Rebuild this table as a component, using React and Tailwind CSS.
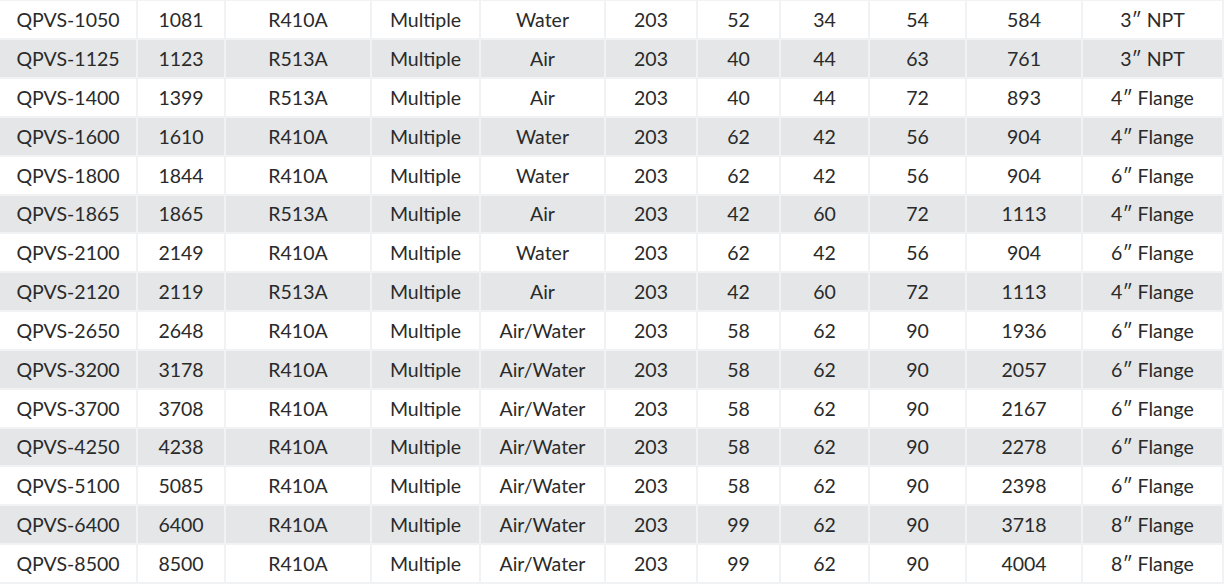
import React from 'react';

const rows = [
  ['QPVS-1050', '1081', 'R410A', 'Multiple', 'Water', '203', '52', '34', '54', '584', '3″ NPT'],
  ['QPVS-1125', '1123', 'R513A', 'Multiple', 'Air', '203', '40', '44', '63', '761', '3″ NPT'],
  ['QPVS-1400', '1399', 'R513A', 'Multiple', 'Air', '203', '40', '44', '72', '893', '4″ Flange'],
  ['QPVS-1600', '1610', 'R410A', 'Multiple', 'Water', '203', '62', '42', '56', '904', '4″ Flange'],
  ['QPVS-1800', '1844', 'R410A', 'Multiple', 'Water', '203', '62', '42', '56', '904', '6″ Flange'],
  ['QPVS-1865', '1865', 'R513A', 'Multiple', 'Air', '203', '42', '60', '72', '1113', '4″ Flange'],
  ['QPVS-2100', '2149', 'R410A', 'Multiple', 'Water', '203', '62', '42', '56', '904', '6″ Flange'],
  ['QPVS-2120', '2119', 'R513A', 'Multiple', 'Air', '203', '42', '60', '72', '1113', '4″ Flange'],
  ['QPVS-2650', '2648', 'R410A', 'Multiple', 'Air/Water', '203', '58', '62', '90', '1936', '6″ Flange'],
  ['QPVS-3200', '3178', 'R410A', 'Multiple', 'Air/Water', '203', '58', '62', '90', '2057', '6″ Flange'],
  ['QPVS-3700', '3708', 'R410A', 'Multiple', 'Air/Water', '203', '58', '62', '90', '2167', '6″ Flange'],
  ['QPVS-4250', '4238', 'R410A', 'Multiple', 'Air/Water', '203', '58', '62', '90', '2278', '6″ Flange'],
  ['QPVS-5100', '5085', 'R410A', 'Multiple', 'Air/Water', '203', '58', '62', '90', '2398', '6″ Flange'],
  ['QPVS-6400', '6400', 'R410A', 'Multiple', 'Air/Water', '203', '99', '62', '90', '3718', '8″ Flange'],
  ['QPVS-8500', '8500', 'R410A', 'Multiple', 'Air/Water', '203', '99', '62', '90', '4004', '8″ Flange'],
];

export default function App() {
  return (
    <div className="w-[1224px] h-[588px] bg-white" style={{ fontFamily: 'Lato, "Noto Sans", sans-serif' }}>
      <div className="flex flex-col gap-[2px] pt-px pr-[2px] pb-[2px] bg-[#f1f2f3]">
        {rows.map((row, i) => (
          <div
            key={i}
            className={`grid grid-cols-[136px_86px_144px_107px_123px_90px_81px_87px_95px_114px_139px] gap-[2px] ${
              i === 5 || i === 11 ? 'h-[36px]' : 'h-[37px]'
            }`}
          >
            {row.map((cell, j) => (
              <div
                key={j}
                className={`flex items-center justify-center text-[19.5px] text-[#2a2a2a] ${
                  i % 2 === 1 ? 'bg-[#e4e6e7]' : 'bg-white'
                }`}
              >
                {cell}
              </div>
            ))}
          </div>
        ))}
      </div>
    </div>
  );
}
